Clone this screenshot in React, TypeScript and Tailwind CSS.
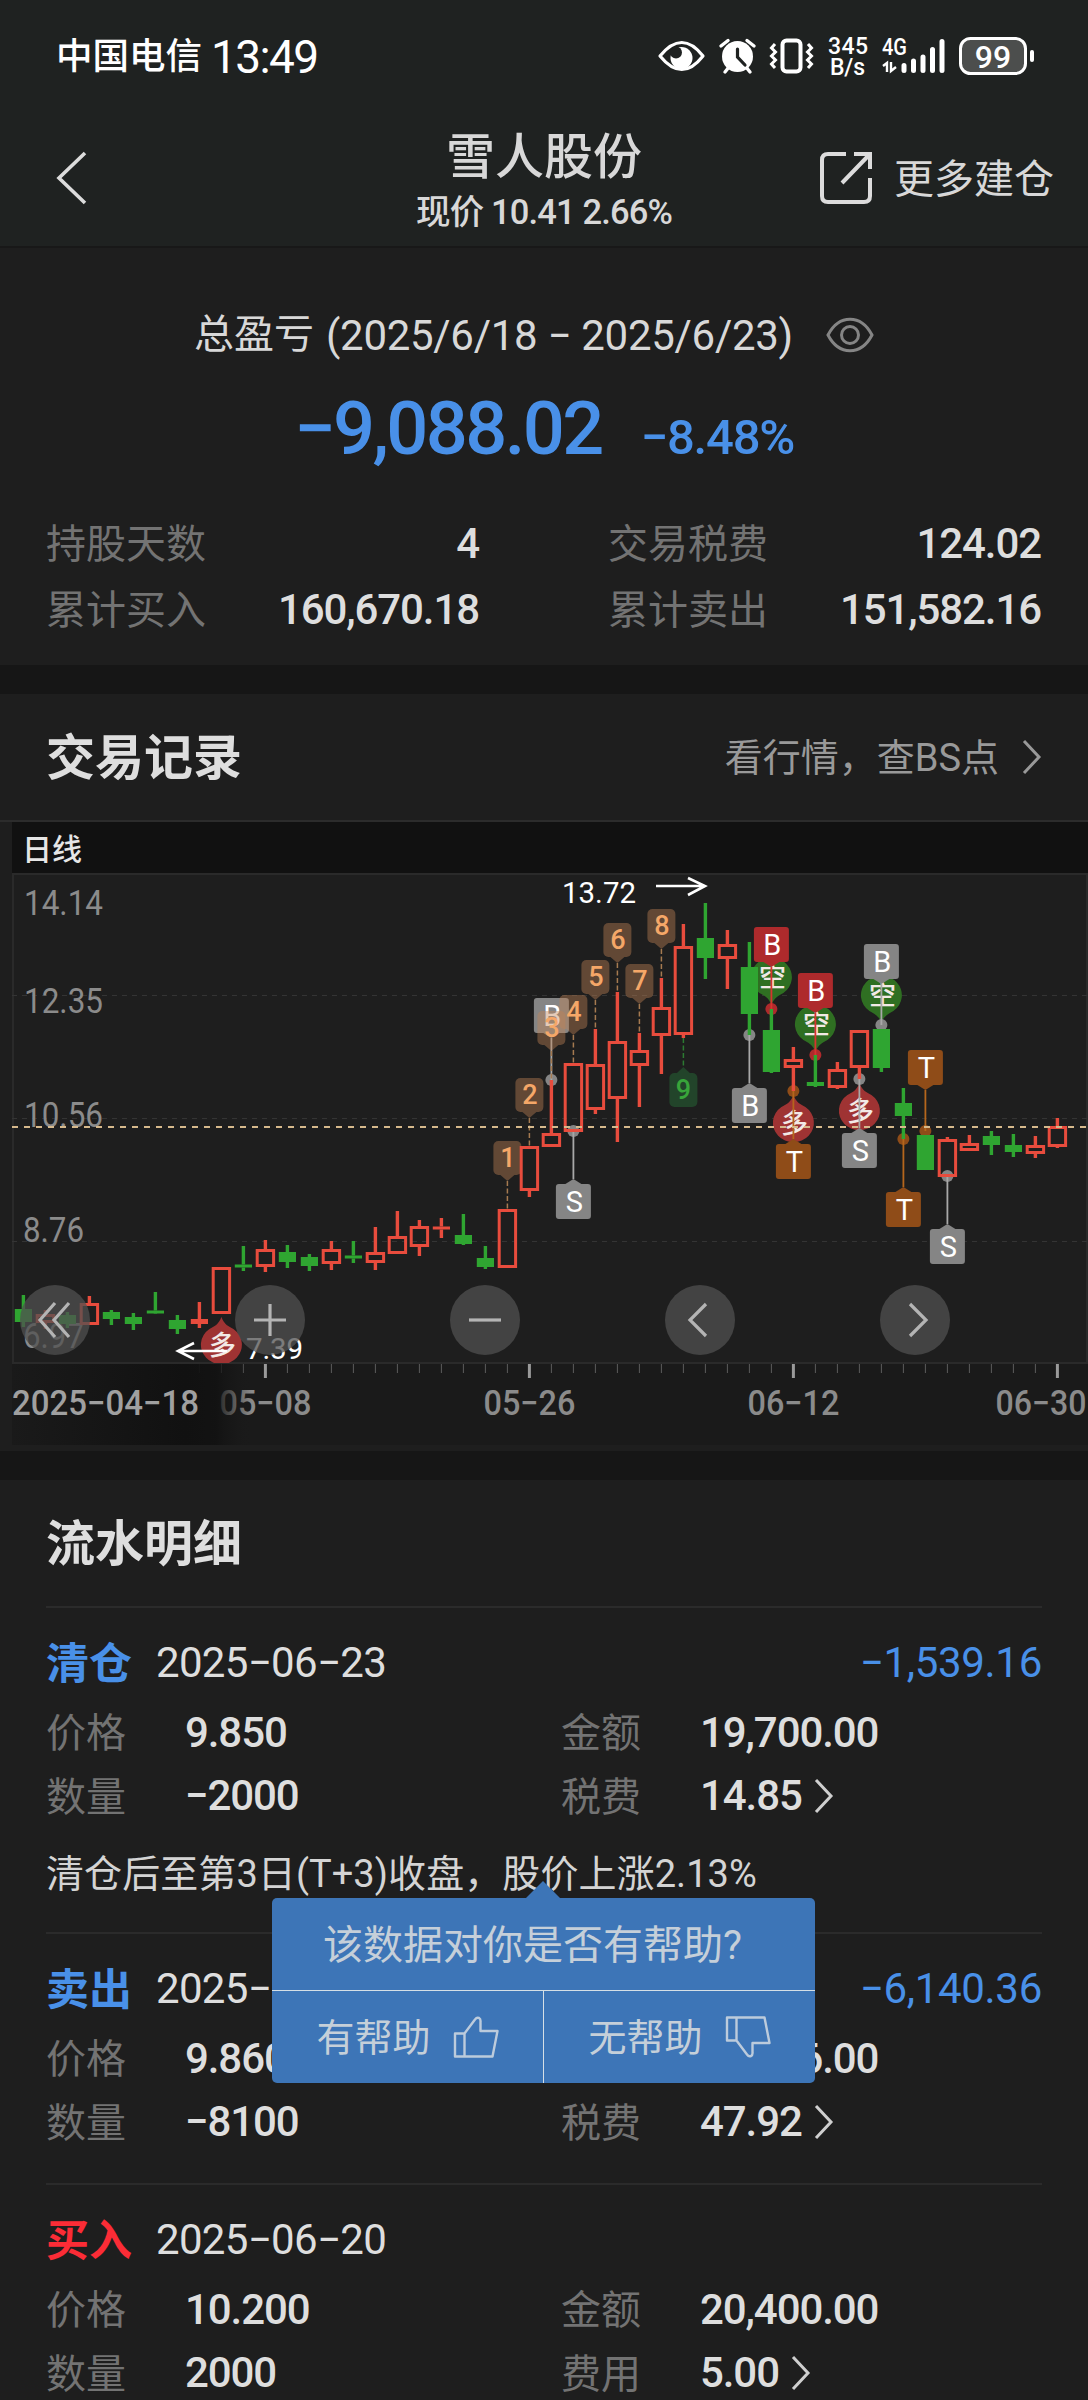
import type { ReactNode } from "react";

type Candle = {
  up?: boolean;
  high: number;
  top: number;
  bottom: number;
  low: number;
};

const RED = "#e84c3d";
const GREEN = "#2fa531";

const r = (high: number, top: number, bottom: number, low: number): Candle => ({ up: true, high, top, bottom, low });
const g = (high: number, top: number, bottom: number, low: number): Candle => ({ high, top, bottom, low });

// one entry per trading day, 04-18 to 06-30
const candles: Candle[] = [
  g(1295, 1309, 1322, 1327),
  r(1310, 1314, 1323, 1329),
  g(1312, 1315, 1324, 1328),
  r(1296, 1303, 1325, 1325),
  g(1310, 1312, 1319, 1325),
  g(1313, 1317, 1324, 1330),
  g(1292, 1310.5, 1313.5, 1313),
  g(1315, 1320, 1329, 1334),
  r(1302, 1319, 1324, 1328),
  r(1267, 1267, 1314, 1314),
  g(1246, 1264.5, 1267.5, 1271),
  r(1240, 1249, 1267, 1272),
  g(1245, 1252, 1262, 1268),
  g(1254, 1257, 1266, 1271),
  r(1241, 1249, 1264, 1270),
  g(1241, 1255.5, 1258.5, 1263),
  r(1227, 1252, 1263, 1270),
  r(1211, 1236, 1254, 1254),
  r(1220, 1226, 1247, 1256),
  r(1218, 1226.5, 1229.5, 1238),
  g(1214, 1235, 1244, 1245),
  g(1246, 1258, 1267, 1269),
  r(1209, 1209, 1268, 1268),
  r(1146, 1146, 1191, 1197),
  r(1080, 1133, 1147, 1147),
  r(1063, 1063, 1132, 1132),
  r(1029, 1064, 1110, 1114),
  r(992, 1041, 1099, 1142),
  r(1033, 1050, 1066, 1107),
  r(978, 1007, 1036, 1074),
  r(924, 946, 1035, 1038),
  g(903, 938, 958, 979),
  r(930, 944, 959, 989),
  g(942, 967, 1014, 1035),
  g(1009, 1030, 1072, 1073),
  r(1047, 1059, 1068, 1091),
  g(1055, 1082, 1086, 1087),
  r(1062, 1069, 1088, 1089),
  r(1030, 1030, 1068, 1079),
  g(1029, 1029, 1068, 1072),
  g(1088, 1103, 1116, 1139),
  g(1135, 1135, 1170, 1170),
  r(1137, 1139, 1177, 1177),
  r(1135, 1143, 1151, 1151),
  g(1131, 1136, 1145, 1155),
  g(1134, 1145, 1152, 1157),
  r(1136, 1145, 1154, 1158),
  r(1118, 1126, 1147, 1148),
];

const dayX = (index: number) => 23.4 + index * 22;

const counts = [
  { day: 22, label: "1", top: 1141, to: 1209 },
  { day: 23, label: "2", top: 1078, to: 1146 },
  { day: 24, label: "3", top: 1011, to: 1080 },
  { day: 25, label: "4", top: 995, to: 1063 },
  { day: 26, label: "5", top: 960, to: 1029 },
  { day: 27, label: "6", top: 923, to: 992 },
  { day: 28, label: "7", top: 964, to: 1033 },
  { day: 29, label: "8", top: 909, to: 978 },
];

const tones = {
  grey: { fill: "#858585", line: "#a8a8a8" },
  red: { fill: "#ae2a2c", line: "#d8332f" },
  brown: { fill: "#8f4c18", line: "#b5661c" },
};

const trades: { day: number; label: string; top: number; dot: number; tone: keyof typeof tones }[] = [
  { day: 24, label: "B", top: 998, dot: 1080, tone: "grey" },
  { day: 25, label: "S", top: 1184, dot: 1131, tone: "grey" },
  { day: 33, label: "B", top: 1088, dot: 1035, tone: "grey" },
  { day: 34, label: "B", top: 927, dot: 1009, tone: "red" },
  { day: 35, label: "T", top: 1144, dot: 1091, tone: "brown" },
  { day: 36, label: "B", top: 973, dot: 1055, tone: "red" },
  { day: 38, label: "S", top: 1133, dot: 1079, tone: "grey" },
  { day: 39, label: "B", top: 944, dot: 1025, tone: "grey" },
  { day: 40, label: "T", top: 1192, dot: 1139, tone: "brown" },
  { day: 41, label: "T", top: 1050, dot: 1131, tone: "brown" },
  { day: 42, label: "S", top: 1229, dot: 1176, tone: "grey" },
];

const pins = [
  { day: 9, y: 1345, long: true },
  { day: 34, y: 977, long: false },
  { day: 35, y: 1123, long: true },
  { day: 36, y: 1024, long: false },
  { day: 38, y: 1111, long: true },
  { day: 39, y: 995, long: false },
];

function Chart() {
  return (
    <svg viewBox="0 873 1088 572" className="block h-[572px] w-full">
      <defs>
        <linearGradient id="fade" x1="0" x2="1" y1="0" y2="0">
          <stop offset="0" stopColor="#1a1a1a" />
          <stop offset="0.72" stopColor="#111111" />
          <stop offset="0.85" stopColor="#111111" stopOpacity="0.85" />
          <stop offset="1" stopColor="#1a1a1a" stopOpacity="0" />
        </linearGradient>
        <clipPath id="plot">
          <rect x="12" y="873" width="1076" height="490" />
        </clipPath>
      </defs>

      <rect x="12" y="1364" width="1076" height="81" fill="#1a1a1a" />
      <path d="M13 1363V874H1087V1363Z" fill="none" stroke="#2a2a2a" strokeWidth="2" />
      <path d="M12 995.5H1088M12 1118.5H1088M12 1241.5H1088" stroke="#343434" strokeDasharray="5 5" />
      <g fill="#8b8b8b" fontSize="35">
        <text x="24" y="915" textLength="79" lengthAdjust="spacingAndGlyphs">14.14</text>
        <text x="24" y="1013" textLength="79" lengthAdjust="spacingAndGlyphs">12.35</text>
        <text x="24" y="1127" textLength="79" lengthAdjust="spacingAndGlyphs">10.56</text>
        <text x="23" y="1242" textLength="61" lengthAdjust="spacingAndGlyphs">8.76</text>
        <text x="23" y="1348" textLength="61" lengthAdjust="spacingAndGlyphs">6.97</text>
      </g>

      <g clipPath="url(#plot)">
        {pins.map((pin) => {
          const x = dayX(pin.day);
          return (
            <g key={pin.day}>
              <path
                transform={`translate(${x} ${pin.y}) scale(1 ${pin.long ? 1 : -1})`}
                d="M0 -28C3 -20 7 -19 12 -16A20.5 19.5 0 1 1 -12 -16C-7 -19 -3 -20 0 -28Z"
                fill={pin.long ? "#9f3333" : "#2f6f22"}
              />
              <text x={x + 1} y={pin.y + 10} fontSize="27" fontWeight="500" fill="#f2e9e6" textAnchor="middle">
                {pin.long ? "多" : "空"}
              </text>
            </g>
          );
        })}
      </g>

      {trades.map((trade) => {
        const x = dayX(trade.day);
        const above = trade.top < trade.dot;
        const edge = above ? trade.top + 35 : trade.top;
        const tip = above ? edge + 5 : edge - 5;
        const tone = tones[trade.tone];
        return (
          <g key={trade.day}>
            <circle cx={x} cy={trade.dot} r="6" fill={tone.fill} />
            <path d={`M${x} ${trade.dot}V${tip}`} stroke={tone.line} strokeWidth="1.8" />
            <path d={`M${x - 8} ${edge}L${x} ${tip}L${x + 8} ${edge}Z`} fill={tone.fill} />
            <rect x={x - 17.5} y={trade.top} width="35" height="35" rx="3" fill={tone.fill} />
            <text x={x + 1} y={trade.top + 27.5} fontSize="29" fill="#ffffff" textAnchor="middle">
              {trade.label}
            </text>
          </g>
        );
      })}

      {counts.map((count) => {
        const x = dayX(count.day);
        return (
          <g key={count.label}>
            <path d={`M${x} ${count.top + 40}V${count.to}`} stroke="#a57a50" strokeWidth="1.5" strokeDasharray="5 2.5" />
            <rect x={x - 14} y={count.top} width="28" height="34" rx="5" fill="#c28455" fillOpacity="0.42" />
            <path d={`M${x - 7} ${count.top + 34}H${x + 7}L${x} ${count.top + 40}Z`} fill="#c28455" fillOpacity="0.42" />
            <text x={x + 0.5} y={count.top + 26} fontSize="27" fontWeight="500" fill="#f5a768" textAnchor="middle">
              {count.label}
            </text>
          </g>
        );
      })}
      <path d="M683.4 1038V1068" stroke="#2c7a31" strokeWidth="1.5" strokeDasharray="5 2.5" />
      <rect x="669.4" y="1073" width="28" height="34" rx="5" fill="#22442a" />
      <path d="M676.4 1073.5H690.4L683.4 1067Z" fill="#22442a" />
      <text x="683.4" y="1099" fontSize="27" fontWeight="500" fill="#38a53a" textAnchor="middle">9</text>

      {candles.map((candle, index) => {
        const x = dayX(index);
        const height = candle.bottom - candle.top;
        const color = candle.up ? RED : GREEN;
        const hollow = candle.up && height > 5;
        return (
          <g key={index}>
            <path
              d={`M${x} ${candle.high}V${candle.top}M${x} ${candle.bottom}V${candle.low}`}
              stroke={color}
              strokeWidth="3.4"
            />
            {hollow ? (
              <rect x={x - 8.2} y={candle.top + 1.5} width="16.4" height={height - 3} fill="none" stroke={color} strokeWidth="3" />
            ) : (
              <rect x={x - 8.6} y={candle.top} width="17.2" height={height} fill={color} />
            )}
          </g>
        );
      })}

      <path d="M12 1127H1088" stroke="#d6b98c" strokeWidth="2" strokeDasharray="6 6" />

      <g fill="none" stroke="#ffffff" strokeWidth="2.6">
        <path d="M656 886H705M688 878L705 886L688 895" />
        <path d="M227 1351H178M194 1343L178 1351L194 1359" />
      </g>
      <text x="562" y="903" fontSize="29.5" fill="#ffffff" textLength="74" lengthAdjust="spacingAndGlyphs">13.72</text>
      <text x="246" y="1359" fontSize="29.5" fill="#ffffff" textLength="57">7.39</text>

      {candles.map((_, index) =>
        index % 12 === 11 ? (
          <path key={index} d={`M${dayX(index)} 1364V1378`} stroke="#9a9a9a" strokeWidth="3" />
        ) : (
          <path key={index} d={`M${dayX(index)} 1364V1373`} stroke="#5c5c5c" />
        )
      )}
      <g fill="#8b8b8b" fontSize="35" fontWeight="500">
        <text x="219.5" y="1415" textLength="92" lengthAdjust="spacingAndGlyphs">05−08</text>
        <text x="483.5" y="1415" textLength="92" lengthAdjust="spacingAndGlyphs">05−26</text>
        <text x="747.5" y="1415" textLength="92" lengthAdjust="spacingAndGlyphs">06−12</text>
        <text x="995.5" y="1415" textLength="91" lengthAdjust="spacingAndGlyphs">06−30</text>
      </g>
      <rect x="12" y="1364" width="240" height="81" fill="url(#fade)" />
      <text x="12" y="1415" fontSize="35" fontWeight="500" fill="#a0a0a0" textLength="187" lengthAdjust="spacingAndGlyphs">
        2025−04−18
      </text>
    </svg>
  );
}

const controls = [
  { name: "first", path: "M35 18L20 35L35 52M49 18L34 35L49 52" },
  { name: "zoom in", path: "M19 35H51M35 19V51" },
  { name: "zoom out", path: "M19 35H51" },
  { name: "previous", path: "M41 19L25 35L41 51" },
  { name: "next", path: "M30 19L46 35L30 51" },
];

function ChartControls() {
  return (
    <div className="absolute top-[412px] left-[20px] flex gap-[145px]">
      {controls.map((control) => (
        <button key={control.name} aria-label={control.name} className="h-[70px] w-[70px] rounded-full bg-[#505050]/75">
          <svg viewBox="0 0 70 70" className="h-full w-full" fill="none" stroke="#b4b4b4" strokeWidth="3.2">
            <path d={control.path} />
          </svg>
        </button>
      ))}
    </div>
  );
}

function StatusIcons() {
  return (
    <svg viewBox="650 20 400 70" className="h-[70px] w-[400px]" fill="#ffffff">
      <path d="M660 56Q682 29 703 56Q682 83 660 56Z" fill="none" stroke="#fff" strokeWidth="3.2" strokeLinejoin="round" />
      <circle cx="681.5" cy="58" r="11" />
      <circle cx="676" cy="52.5" r="6" fill="#1f2221" />
      <circle cx="737.5" cy="56.5" r="15.5" />
      <path d="M721 46L728 40.5M754 46L747 40.5M725 72L729 67M750 72L746 67" stroke="#fff" strokeWidth="3.4" strokeLinecap="round" />
      <path d="M737.5 49V57L745 65" fill="none" stroke="#1f2221" strokeWidth="3.2" strokeLinecap="round" />
      <rect x="782.5" y="40.5" width="18" height="31" rx="4" fill="none" stroke="#fff" strokeWidth="4" />
      <path
        d="M775 44L771.5 48L775.5 52L771.5 56L775.5 60L771.5 64L775 68M808 44L811.5 48L807.5 52L811.5 56L807.5 60L811.5 64L808 68"
        fill="none"
        stroke="#fff"
        strokeWidth="3"
      />
      <g fontWeight="500">
        <text x="828" y="54" fontSize="23" textLength="40">345</text>
        <text x="830" y="75" fontSize="23" textLength="35">B/s</text>
        <text x="882" y="55" fontSize="23.5" textLength="25" lengthAdjust="spacingAndGlyphs">4G</text>
      </g>
      <path d="M883 66L887 63V72M891 62V71L896 67" fill="none" stroke="#fff" strokeWidth="2.4" />
      <path d="M904 65.5V70.5M913.5 61V70.5M923 57V70.5M932.5 49.5V70.5M942 41.5V70.5" stroke="#fff" strokeWidth="5" strokeLinecap="round" />
      <rect x="960.5" y="38.5" width="65" height="35" rx="10" fill="#4c4e4d" stroke="#fff" strokeWidth="3" />
      <path d="M1032 52V60" stroke="#fff" strokeWidth="4" strokeLinecap="round" />
      <text x="993" y="67.5" fontSize="32" fontWeight="500" textAnchor="middle">99</text>
    </svg>
  );
}

function Chevron({ className = "" }: { className?: string }) {
  return (
    <svg viewBox="0 0 20 36" className={`h-[36px] w-[20px] ${className}`} fill="none" stroke="currentColor" strokeWidth="3">
      <path d="M2 2L17 18L2 34" />
    </svg>
  );
}

function Num({ children, className = "" }: { children: ReactNode; className?: string }) {
  return <span className={`text-[42px] font-medium tracking-[-0.026em] text-[#dedede] ${className}`}>{children}</span>;
}

const stats = [
  ["持股天数", "4"],
  ["交易税费", "124.02"],
  ["累计买入", "160,670.18"],
  ["累计卖出", "151,582.16"],
];

type RecordEntry = {
  type: string;
  color: string;
  date: string;
  profit?: string;
  price: string;
  amount: string;
  quantity: string;
  feeLabel: string;
  fee: string;
  note?: string;
};

const records: RecordEntry[] = [
  {
    type: "清仓",
    color: "text-[#4990e8]",
    date: "2025−06−23",
    profit: "−1,539.16",
    price: "9.850",
    amount: "19,700.00",
    quantity: "−2000",
    feeLabel: "税费",
    fee: "14.85",
    note: "清仓后至第3日(T+3)收盘，股价上涨2.13%",
  },
  {
    type: "卖出",
    color: "text-[#4990e8]",
    date: "2025−06−20",
    profit: "−6,140.36",
    price: "9.860",
    amount: "79,866.00",
    quantity: "−8100",
    feeLabel: "税费",
    fee: "47.92",
  },
  {
    type: "买入",
    color: "text-[#fb2c36]",
    date: "2025−06−20",
    price: "10.200",
    amount: "20,400.00",
    quantity: "2000",
    feeLabel: "费用",
    fee: "5.00",
  },
];

function Cell({ label, value, link, className }: { label: string; value: string; link?: boolean; className: string }) {
  return (
    <div className={`flex items-center ${className}`}>
      <span className="w-[139px] pt-[4px] text-[40px] text-[#737373]">{label}</span>
      <Num>{value}</Num>
      {link && <Chevron className="ml-[12px] text-[#cfcfcf]" />}
    </div>
  );
}

function RecordItem({ record }: { record: RecordEntry }) {
  return (
    <li className={`border-t-2 border-[#2b2b2b] ${record.note ? "h-[326px]" : "h-[251px]"}`}>
      <div className="flex h-[70px] items-center pt-[39px]">
        <span className={`w-[110px] pt-[3px] text-[43px] font-bold ${record.color}`}>{record.type}</span>
        <Num className="font-normal tracking-[-0.016em]!">{record.date}</Num>
        {record.profit && <Num className="ml-auto font-normal tracking-[-0.007em]! text-[#4990e8]!">{record.profit}</Num>}
      </div>
      <div className="mt-[22px] flex h-[64px] items-center">
        <Cell className="w-[515px]" label="价格" value={record.price} />
        <Cell className="" label="金额" value={record.amount} />
      </div>
      <div className="flex h-[63px] items-center">
        <Cell className="w-[515px]" label="数量" value={record.quantity} />
        <Cell className="" label={record.feeLabel} value={record.fee} link />
      </div>
      {record.note && <p className="mt-[17px] text-[38px] leading-[60px] tracking-[0.002em] text-[#d4d4d4]">{record.note}</p>}
    </li>
  );
}

function ThumbIcon({ down }: { down?: boolean }) {
  return (
    <svg
      viewBox="0 0 46 42"
      className={`h-[42px] w-[46px] ${down ? "-scale-y-100" : ""}`}
      fill="none"
      stroke="#bccbdc"
      strokeWidth="2.4"
      strokeLinejoin="round"
    >
      <path d="M2 17.5H11.5L22 3.5C24.5 0 28 2 27.5 6V15H44.5L39.5 40.5H2ZM11.5 17.5V40.5" />
    </svg>
  );
}

function FeedbackPopup() {
  return (
    <div className="absolute top-[418px] left-[272px] flex h-[185px] w-[543px] flex-col rounded-[5px] bg-[#3d75b7] text-[#c5cfd9]">
      <svg viewBox="0 0 36 18" className="absolute -top-[17px] left-[253px] h-[18px] w-[36px]">
        <path d="M0 18L18 0L36 18Z" fill="#3d75b7" />
      </svg>
      <div className="flex h-[93px] items-center border-b border-[#d5dfe6] pt-[4px] pl-[51px] text-[40px]">该数据对你是否有帮助?</div>
      <div className="flex flex-1 text-[38px]">
        <button className="flex flex-1 items-center justify-center gap-[22px] border-r border-[#d5dfe6]">
          <span className="pt-[2px]">有帮助</span>
          <ThumbIcon />
        </button>
        <button className="flex flex-1 items-center justify-center gap-[22px]">
          <span className="pt-[2px]">无帮助</span>
          <ThumbIcon down />
        </button>
      </div>
    </div>
  );
}

export default function App() {
  return (
    <div className="h-[2400px] w-[1088px] overflow-hidden bg-[#1e1e1e] font-['Roboto','Noto_Sans_CJK_SC',sans-serif] text-[#d8d8d8]">
      <header className="h-[248px] border-b-2 border-[#181818] bg-[#1f2221]">
        <div className="flex h-[110px] items-center justify-between pr-[38px] pl-[56px] text-white">
          <div className="flex items-center gap-[9px] pt-[4px]">
            <span className="text-[36.5px] font-medium">中国电信</span>
            <span className="text-[46px] leading-none tracking-[-0.035em]">13:49</span>
          </div>
          <StatusIcons />
        </div>
        <div className="flex h-[136px] items-center">
          <div className="flex w-[360px] pl-[56px]">
            <svg viewBox="0 0 32 54" className="h-[54px] w-[32px]" fill="none" stroke="#dcdcdc" strokeWidth="3.6">
              <path d="M29 2L3 27L29 52" />
            </svg>
          </div>
          <div className="w-[368px] pt-[9px] text-center">
            <h1 className="text-[49px] leading-[58px] font-medium">雪人股份</h1>
            <p className="text-[34.5px] leading-[50px] font-medium tracking-[-0.025em]">现价 10.41 2.66%</p>
          </div>
          <a className="flex w-[360px] items-center justify-end gap-[22px] pr-[34px] text-[40px]">
            <svg viewBox="0 0 52 52" className="h-[52px] w-[52px]" fill="none" stroke="#dcdcdc" strokeWidth="4">
              <path d="M26 2H8Q2 2 2 8V44Q2 50 8 50H44Q50 50 50 44V26M34 2H50V17M50 2L22 31" />
            </svg>
            <span className="pt-[3px]">更多建仓</span>
          </a>
        </div>
      </header>

      <section className="h-[417px] pt-[56px]">
        <div className="flex h-[62px] items-center pl-[194px]">
          <span className="text-[40px]">总盈亏</span>
          <span className="ml-[12px] text-[42px] tracking-[-0.007em] whitespace-nowrap">(2025/6/18 − 2025/6/23)</span>
          <svg viewBox="0 0 48 36" className="ml-[33px] h-[36px] w-[48px]" fill="none" stroke="#858585" strokeWidth="3">
            <path d="M2 18C13 -3 35 -3 46 18C35 39 13 39 2 18Z" />
            <circle cx="24" cy="18" r="8.5" />
          </svg>
        </div>
        <div className="mt-[18px] flex h-[90px] items-baseline justify-center gap-[39px] font-medium text-[#4990e8]">
          <span className="text-[74px] leading-[90px] tracking-[-0.035em]">−9,088.02</span>
          <span className="text-[49px] tracking-[-0.025em]">−8.48%</span>
        </div>
        <div className="mt-[36px] grid grid-cols-[433px_433px] gap-x-[129px] pl-[46px]">
          {stats.map(([label, value]) => (
            <div key={label} className="flex h-[66px] items-center justify-between">
              <span className="pt-[4px] text-[40px] text-[#737373]">{label}</span>
              <Num>{value}</Num>
            </div>
          ))}
        </div>
      </section>

      <div className="h-[29px] bg-[#161616]" />

      <section className="h-[757px]">
        <div className="flex h-[128px] items-center justify-between border-b-2 border-[#2c2c2c] pr-[46px] pl-[46px]">
          <h2 className="pt-[4px] text-[49px] font-bold text-[#dedede]">交易记录</h2>
          <a className="flex items-center gap-[23px] text-[38px] text-[#999999]">
            <span className="pt-[2px]">看行情，查BS点</span>
            <Chevron />
          </a>
        </div>
        <div className="relative">
          <div className="ml-[12px] flex h-[51px] items-center bg-[#111111] pt-[3px] pl-[10px] text-[30px] font-medium text-[#e6e6e6]">
            日线
          </div>
          <Chart />
          <div className="absolute top-[51px] left-0">
            <ChartControls />
          </div>
        </div>
      </section>

      <div className="h-[29px] bg-[#161616]" />

      <section className="relative px-[46px]">
        <h2 className="flex h-[126px] items-center pt-[4px] text-[49px] font-bold text-[#dedede]">流水明细</h2>
        <ul>
          {records.map((record) => (
            <RecordItem key={record.type} record={record} />
          ))}
        </ul>
        <FeedbackPopup />
      </section>
    </div>
  );
}
